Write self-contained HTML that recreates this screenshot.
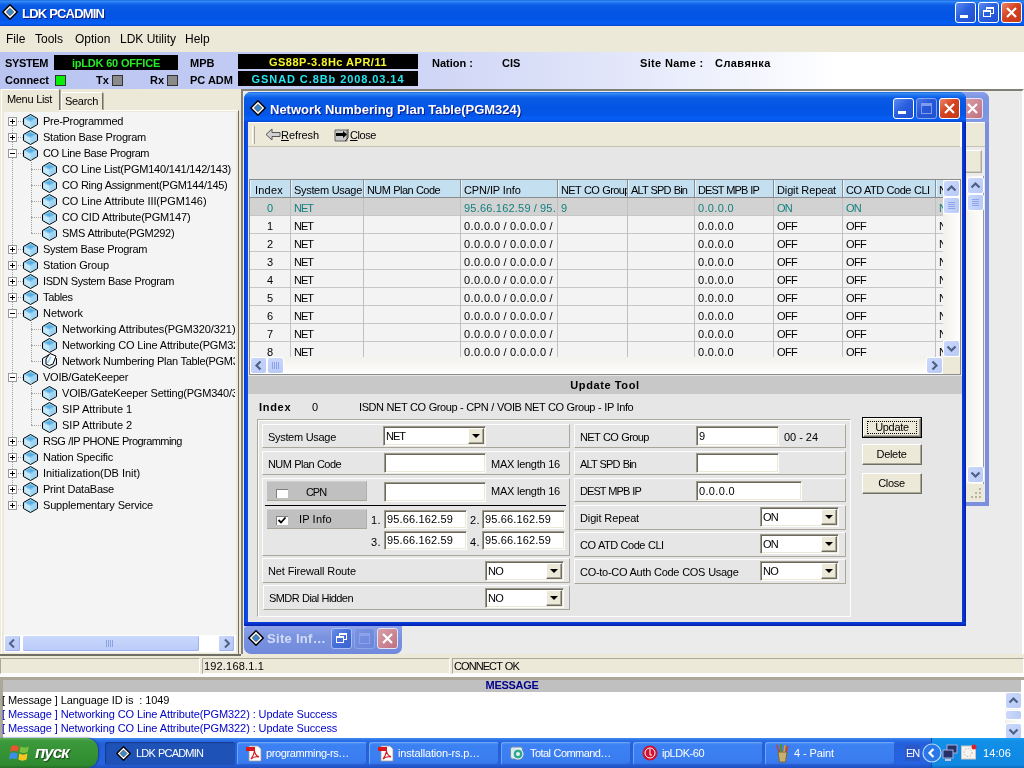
<!DOCTYPE html><html><head><meta charset="utf-8"><title>LDK PCADMIN</title><style>
*{box-sizing:border-box;margin:0;padding:0}
html,body{width:1024px;height:768px;overflow:hidden;background:#ebebeb}
body{font-family:"Liberation Sans",sans-serif;font-size:11px;color:#000;position:relative;letter-spacing:-0.2px;will-change:transform}
.a{position:absolute;white-space:nowrap}
.t{position:absolute;white-space:nowrap;line-height:14px;height:14px}
.b{font-weight:bold}
.xptitle{background:linear-gradient(180deg,#0a5fe0 0,#3b8df5 4%,#2178f0 10%,#0a5ce6 20%,#0455e4 50%,#0356e8 75%,#0660f5 88%,#0558ee 94%,#0345c8 100%)}
.sunk{border:1px solid;border-color:#9d9a8c #fdfdfb #fdfdfb #9d9a8c;box-shadow:inset 1px 1px 0 #6a685c, inset -1px -1px 0 #ece9d8;background:#fff}
.grp{position:absolute;border:1px solid;border-color:#aaa79a #fdfdfd #fdfdfd #aaa79a;box-shadow:inset 1px 1px 0 #fdfdfd;background:#e6e6e6}
.row{position:absolute;border:1px solid;border-color:#fdfdfd #aaa79a #aaa79a #fdfdfd;background:#e6e6e6}
.btn{position:absolute;background:#ece9d8;border:1px solid;border-color:#fff #716f64 #716f64 #fff;box-shadow:inset -1px -1px 0 #aca899;text-align:center;line-height:18px}
.cbb{position:absolute;width:16px;height:16px;background:#ece9d8;border:1px solid;border-color:#fff #6e6c60 #6e6c60 #fff;box-shadow:inset -1px -1px 0 #aca899}
.cbb:after{content:"";position:absolute;left:3px;top:5px;border:4px solid transparent;border-top:4px solid #000;border-bottom:none}
</style></head><body>
<div class="a xptitle" style="left:0px;top:0px;width:1024px;height:26px;"></div>
<div class="t" style="left:22px;top:6px;color:#fff;font-weight:bold;font-size:13px;line-height:16px;height:16px;text-shadow:1px 1px 0 #0a1883;letter-spacing:-0.8px">LDK PCADMIN</div>
<svg class="a" style="left:2px;top:4px" width="16" height="16" viewBox="0 0 15 15"><path d="M7.5 0.7 L14.3 7.5 L7.5 14.3 L0.7 7.5Z" fill="#fff" stroke="#000" stroke-width="1.4"/><path d="M7.5 4 L11 7.5 L7.5 11 L4 7.5Z" fill="#3a8ad0" stroke="#555" stroke-width="0.8"/></svg>
<div class="a" style="left:955px;top:2px;width:21px;height:21px;border:1px solid #fff;border-radius:3px;background:linear-gradient(135deg,#5f8cf0 0,#2a5fe0 45%,#1f4fd0 100%)"><div class="a" style="left:4px;top:12px;width:8px;height:3px;background:#fff"></div></div>
<div class="a" style="left:978px;top:2px;width:21px;height:21px;border:1px solid #fff;border-radius:3px;background:linear-gradient(135deg,#5f8cf0 0,#2a5fe0 45%,#1f4fd0 100%)"><div class="a" style="left:7px;top:4px;width:8px;height:7px;border:1px solid #fff;border-top-width:2px"></div><div class="a" style="left:4px;top:7px;width:8px;height:7px;border:1px solid #fff;border-top-width:2px;background:#2a5fe0"></div></div>
<div class="a" style="left:1001px;top:2px;width:21px;height:21px;border:1px solid #fff;border-radius:3px;background:linear-gradient(135deg,#e8876a 0,#d6431f 45%,#c4381a 100%)"><svg class="a" style="left:0;top:0" width="19" height="19" viewBox="0 0 19 19"><path d="M5 5 L14 14 M14 5 L5 14" stroke="#fff" stroke-width="2.2" fill="none"/></svg></div>
<div class="a" style="left:0px;top:26px;width:1024px;height:26px;background:#ece9d8"></div>
<div class="t" style="left:6px;top:31px;font-size:12px;line-height:16px;height:16px;letter-spacing:0">File</div>
<div class="t" style="left:35px;top:31px;font-size:12px;line-height:16px;height:16px;letter-spacing:0">Tools</div>
<div class="t" style="left:75px;top:31px;font-size:12px;line-height:16px;height:16px;letter-spacing:0">Option</div>
<div class="t" style="left:120px;top:31px;font-size:12px;line-height:16px;height:16px;letter-spacing:0">LDK Utility</div>
<div class="t" style="left:185px;top:31px;font-size:12px;line-height:16px;height:16px;letter-spacing:0">Help</div>
<div class="a" style="left:0px;top:52px;width:1024px;height:37px;background:linear-gradient(90deg,#b9c4f1 0,#c3ccf3 30%,#e2e6fa 60%,#fff 82%)"></div>
<div class="t" style="left:5px;top:56px;font-weight:bold;letter-spacing:-0.37px">SYSTEM</div>
<div class="a" style="left:54px;top:55px;width:124px;height:15px;background:#000"></div>
<div class="t" style="left:54px;top:56px;font-weight:bold;letter-spacing:-0.2px;color:#28e828;width:124px;text-align:center">ipLDK 60 OFFICE</div>
<div class="t" style="left:190px;top:56px;font-weight:bold;letter-spacing:0;">MPB</div>
<div class="a" style="left:238px;top:54px;width:180px;height:15px;background:#000"></div>
<div class="t" style="left:238px;top:55px;font-weight:bold;letter-spacing:0.5px;color:#f6f624;width:180px;text-align:center">GS88P-3.8Hc APR/11</div>
<div class="t" style="left:432px;top:56px;font-weight:bold;letter-spacing:0;">Nation :</div>
<div class="t" style="left:502px;top:56px;font-weight:bold;letter-spacing:0;">CIS</div>
<div class="t" style="left:640px;top:56px;font-weight:bold;letter-spacing:0.33px">Site Name :</div>
<div class="t" style="left:715px;top:56px;font-weight:bold;letter-spacing:0.44px">Славянка</div>
<div class="t" style="left:5px;top:73px;font-weight:bold;letter-spacing:0;">Connect</div>
<div class="a" style="left:55px;top:75px;width:11px;height:11px;background:#08ee08;border:1px solid #333"></div>
<div class="t" style="left:96px;top:73px;font-weight:bold;letter-spacing:0;">Tx</div>
<div class="a" style="left:112px;top:75px;width:11px;height:11px;background:#8a8a8a;border:1px solid #333"></div>
<div class="t" style="left:150px;top:73px;font-weight:bold;letter-spacing:0;">Rx</div>
<div class="a" style="left:167px;top:75px;width:11px;height:11px;background:#8a8a8a;border:1px solid #333"></div>
<div class="t" style="left:190px;top:73px;font-weight:bold;letter-spacing:0;">PC ADM</div>
<div class="a" style="left:238px;top:71px;width:180px;height:15px;background:#000"></div>
<div class="t" style="left:238px;top:72px;font-weight:bold;letter-spacing:0.92px;color:#28e4f0;width:180px;text-align:center">GSNAD C.8Bb 2008.03.14</div>
<div class="a" style="left:0px;top:89px;width:241px;height:568px;background:#ece9d8"></div>
<div class="a" style="left:61px;top:92px;width:42px;height:18px;border:1px solid;border-color:#fff #716f64 transparent #fff;border-radius:2px 2px 0 0;box-shadow:1px 0 0 #aca899"></div>
<div class="t" style="left:65px;top:94px;;letter-spacing:-0.31px">Search</div>
<div class="a" style="left:1px;top:89px;width:59px;height:22px;border:1px solid;border-color:#fff #716f64 transparent #fff;border-radius:2px 2px 0 0;background:#ece9d8;box-shadow:1px 0 0 #aca899"></div>
<div class="t" style="left:7px;top:92px;;letter-spacing:-0.33px;word-spacing:0.27px">Menu List</div>
<div class="a" style="left:1px;top:110px;width:238px;height:545px;border:1px solid;border-color:#fff #716f64 #716f64 #fff;"></div>
<div class="a" style="left:2px;top:110px;width:57px;height:2px;background:#ece9d8"></div>
<div class="a" style="left:4px;top:112px;width:232px;height:541px;background:#f4f4f4"></div>
<div class="a" style="left:4px;top:112px;width:231px;height:523px;overflow:hidden">
<div class="a" style="left:8px;top:9px;width:0;height:384px;border-left:1px dotted #a0a0a0"></div>
<div class="a" style="left:9px;top:9px;width:12px;height:0;border-top:1px dotted #a0a0a0"></div>
<div class="a" style="left:4px;top:5px;width:9px;height:9px;border:1px solid #9a9a9a;background:#fff"><div class="a" style="left:1px;top:3px;width:5px;height:1px;background:#000"></div><div class="a" style="left:3px;top:1px;width:1px;height:5px;background:#000"></div></div>
<svg class="a" style="left:19px;top:2px" width="16" height="15" viewBox="0 0 16 15"><path d="M7.5 0.5 L14.5 4.5 L14.5 10.5 L7.5 14.5 L0.5 10.5 L0.5 4.5Z" fill="#a6daf5" stroke="#000" stroke-width="1"/><path d="M7.5 1.6 L13.4 4.8 L7.5 8 L1.6 4.8Z" fill="#7cc6ec"/><path d="M7.5 2.8 L11.2 4.6 L7.5 6.4 L3.8 4.6Z" fill="#58afe0"/><path d="M7.5 8 L13.6 4.9 L13.6 10.2 L7.5 13.5Z" fill="#9dd4f2"/><path d="M7.5 8 L1.4 4.9 L1.4 10.2 L7.5 13.5Z" fill="#c3e8fa"/></svg>
<div class="t" style="left:39px;top:2px;;letter-spacing:-0.31px">Pre-Programmed</div>
<div class="a" style="left:9px;top:25px;width:12px;height:0;border-top:1px dotted #a0a0a0"></div>
<div class="a" style="left:4px;top:21px;width:9px;height:9px;border:1px solid #9a9a9a;background:#fff"><div class="a" style="left:1px;top:3px;width:5px;height:1px;background:#000"></div><div class="a" style="left:3px;top:1px;width:1px;height:5px;background:#000"></div></div>
<svg class="a" style="left:19px;top:18px" width="16" height="15" viewBox="0 0 16 15"><path d="M7.5 0.5 L14.5 4.5 L14.5 10.5 L7.5 14.5 L0.5 10.5 L0.5 4.5Z" fill="#a6daf5" stroke="#000" stroke-width="1"/><path d="M7.5 1.6 L13.4 4.8 L7.5 8 L1.6 4.8Z" fill="#7cc6ec"/><path d="M7.5 2.8 L11.2 4.6 L7.5 6.4 L3.8 4.6Z" fill="#58afe0"/><path d="M7.5 8 L13.6 4.9 L13.6 10.2 L7.5 13.5Z" fill="#9dd4f2"/><path d="M7.5 8 L1.4 4.9 L1.4 10.2 L7.5 13.5Z" fill="#c3e8fa"/></svg>
<div class="t" style="left:39px;top:18px;;letter-spacing:-0.25px;word-spacing:0.19px">Station Base Program</div>
<div class="a" style="left:9px;top:41px;width:12px;height:0;border-top:1px dotted #a0a0a0"></div>
<div class="a" style="left:4px;top:37px;width:9px;height:9px;border:1px solid #9a9a9a;background:#fff"><div class="a" style="left:1px;top:3px;width:5px;height:1px;background:#000"></div></div>
<svg class="a" style="left:19px;top:34px" width="16" height="15" viewBox="0 0 16 15"><path d="M7.5 0.5 L14.5 4.5 L14.5 10.5 L7.5 14.5 L0.5 10.5 L0.5 4.5Z" fill="#a6daf5" stroke="#000" stroke-width="1"/><path d="M7.5 1.6 L13.4 4.8 L7.5 8 L1.6 4.8Z" fill="#7cc6ec"/><path d="M7.5 2.8 L11.2 4.6 L7.5 6.4 L3.8 4.6Z" fill="#58afe0"/><path d="M7.5 8 L13.6 4.9 L13.6 10.2 L7.5 13.5Z" fill="#9dd4f2"/><path d="M7.5 8 L1.4 4.9 L1.4 10.2 L7.5 13.5Z" fill="#c3e8fa"/></svg>
<div class="t" style="left:39px;top:34px;;letter-spacing:-0.44px;word-spacing:0.38px">CO Line Base Program</div>
<div class="a" style="left:27px;top:57px;width:12px;height:0;border-top:1px dotted #a0a0a0"></div>
<svg class="a" style="left:38px;top:50px" width="16" height="15" viewBox="0 0 16 15"><path d="M7.5 0.5 L14.5 4.5 L14.5 10.5 L7.5 14.5 L0.5 10.5 L0.5 4.5Z" fill="#a6daf5" stroke="#000" stroke-width="1"/><path d="M7.5 1.6 L13.4 4.8 L7.5 8 L1.6 4.8Z" fill="#7cc6ec"/><path d="M7.5 2.8 L11.2 4.6 L7.5 6.4 L3.8 4.6Z" fill="#58afe0"/><path d="M7.5 8 L13.6 4.9 L13.6 10.2 L7.5 13.5Z" fill="#9dd4f2"/><path d="M7.5 8 L1.4 4.9 L1.4 10.2 L7.5 13.5Z" fill="#c3e8fa"/></svg>
<div class="t" style="left:58px;top:50px;;letter-spacing:-0.21px;word-spacing:0.15px">CO Line List(PGM140/141/142/143)</div>
<div class="a" style="left:27px;top:73px;width:12px;height:0;border-top:1px dotted #a0a0a0"></div>
<svg class="a" style="left:38px;top:66px" width="16" height="15" viewBox="0 0 16 15"><path d="M7.5 0.5 L14.5 4.5 L14.5 10.5 L7.5 14.5 L0.5 10.5 L0.5 4.5Z" fill="#a6daf5" stroke="#000" stroke-width="1"/><path d="M7.5 1.6 L13.4 4.8 L7.5 8 L1.6 4.8Z" fill="#7cc6ec"/><path d="M7.5 2.8 L11.2 4.6 L7.5 6.4 L3.8 4.6Z" fill="#58afe0"/><path d="M7.5 8 L13.6 4.9 L13.6 10.2 L7.5 13.5Z" fill="#9dd4f2"/><path d="M7.5 8 L1.4 4.9 L1.4 10.2 L7.5 13.5Z" fill="#c3e8fa"/></svg>
<div class="t" style="left:58px;top:66px;;letter-spacing:-0.31px;word-spacing:0.25px">CO Ring Assignment(PGM144/145)</div>
<div class="a" style="left:27px;top:89px;width:12px;height:0;border-top:1px dotted #a0a0a0"></div>
<svg class="a" style="left:38px;top:82px" width="16" height="15" viewBox="0 0 16 15"><path d="M7.5 0.5 L14.5 4.5 L14.5 10.5 L7.5 14.5 L0.5 10.5 L0.5 4.5Z" fill="#a6daf5" stroke="#000" stroke-width="1"/><path d="M7.5 1.6 L13.4 4.8 L7.5 8 L1.6 4.8Z" fill="#7cc6ec"/><path d="M7.5 2.8 L11.2 4.6 L7.5 6.4 L3.8 4.6Z" fill="#58afe0"/><path d="M7.5 8 L13.6 4.9 L13.6 10.2 L7.5 13.5Z" fill="#9dd4f2"/><path d="M7.5 8 L1.4 4.9 L1.4 10.2 L7.5 13.5Z" fill="#c3e8fa"/></svg>
<div class="t" style="left:58px;top:82px;;letter-spacing:-0.08px;word-spacing:0.02px">CO Line Attribute III(PGM146)</div>
<div class="a" style="left:27px;top:105px;width:12px;height:0;border-top:1px dotted #a0a0a0"></div>
<svg class="a" style="left:38px;top:98px" width="16" height="15" viewBox="0 0 16 15"><path d="M7.5 0.5 L14.5 4.5 L14.5 10.5 L7.5 14.5 L0.5 10.5 L0.5 4.5Z" fill="#a6daf5" stroke="#000" stroke-width="1"/><path d="M7.5 1.6 L13.4 4.8 L7.5 8 L1.6 4.8Z" fill="#7cc6ec"/><path d="M7.5 2.8 L11.2 4.6 L7.5 6.4 L3.8 4.6Z" fill="#58afe0"/><path d="M7.5 8 L13.6 4.9 L13.6 10.2 L7.5 13.5Z" fill="#9dd4f2"/><path d="M7.5 8 L1.4 4.9 L1.4 10.2 L7.5 13.5Z" fill="#c3e8fa"/></svg>
<div class="t" style="left:58px;top:98px;;letter-spacing:-0.19px;word-spacing:0.13px">CO CID Attribute(PGM147)</div>
<div class="a" style="left:27px;top:121px;width:12px;height:0;border-top:1px dotted #a0a0a0"></div>
<svg class="a" style="left:38px;top:114px" width="16" height="15" viewBox="0 0 16 15"><path d="M7.5 0.5 L14.5 4.5 L14.5 10.5 L7.5 14.5 L0.5 10.5 L0.5 4.5Z" fill="#a6daf5" stroke="#000" stroke-width="1"/><path d="M7.5 1.6 L13.4 4.8 L7.5 8 L1.6 4.8Z" fill="#7cc6ec"/><path d="M7.5 2.8 L11.2 4.6 L7.5 6.4 L3.8 4.6Z" fill="#58afe0"/><path d="M7.5 8 L13.6 4.9 L13.6 10.2 L7.5 13.5Z" fill="#9dd4f2"/><path d="M7.5 8 L1.4 4.9 L1.4 10.2 L7.5 13.5Z" fill="#c3e8fa"/></svg>
<div class="t" style="left:58px;top:114px;;letter-spacing:-0.28px;word-spacing:0.22px">SMS Attribute(PGM292)</div>
<div class="a" style="left:9px;top:137px;width:12px;height:0;border-top:1px dotted #a0a0a0"></div>
<div class="a" style="left:4px;top:133px;width:9px;height:9px;border:1px solid #9a9a9a;background:#fff"><div class="a" style="left:1px;top:3px;width:5px;height:1px;background:#000"></div><div class="a" style="left:3px;top:1px;width:1px;height:5px;background:#000"></div></div>
<svg class="a" style="left:19px;top:130px" width="16" height="15" viewBox="0 0 16 15"><path d="M7.5 0.5 L14.5 4.5 L14.5 10.5 L7.5 14.5 L0.5 10.5 L0.5 4.5Z" fill="#a6daf5" stroke="#000" stroke-width="1"/><path d="M7.5 1.6 L13.4 4.8 L7.5 8 L1.6 4.8Z" fill="#7cc6ec"/><path d="M7.5 2.8 L11.2 4.6 L7.5 6.4 L3.8 4.6Z" fill="#58afe0"/><path d="M7.5 8 L13.6 4.9 L13.6 10.2 L7.5 13.5Z" fill="#9dd4f2"/><path d="M7.5 8 L1.4 4.9 L1.4 10.2 L7.5 13.5Z" fill="#c3e8fa"/></svg>
<div class="t" style="left:39px;top:130px;;letter-spacing:-0.35px;word-spacing:0.29px">System Base Program</div>
<div class="a" style="left:9px;top:153px;width:12px;height:0;border-top:1px dotted #a0a0a0"></div>
<div class="a" style="left:4px;top:149px;width:9px;height:9px;border:1px solid #9a9a9a;background:#fff"><div class="a" style="left:1px;top:3px;width:5px;height:1px;background:#000"></div><div class="a" style="left:3px;top:1px;width:1px;height:5px;background:#000"></div></div>
<svg class="a" style="left:19px;top:146px" width="16" height="15" viewBox="0 0 16 15"><path d="M7.5 0.5 L14.5 4.5 L14.5 10.5 L7.5 14.5 L0.5 10.5 L0.5 4.5Z" fill="#a6daf5" stroke="#000" stroke-width="1"/><path d="M7.5 1.6 L13.4 4.8 L7.5 8 L1.6 4.8Z" fill="#7cc6ec"/><path d="M7.5 2.8 L11.2 4.6 L7.5 6.4 L3.8 4.6Z" fill="#58afe0"/><path d="M7.5 8 L13.6 4.9 L13.6 10.2 L7.5 13.5Z" fill="#9dd4f2"/><path d="M7.5 8 L1.4 4.9 L1.4 10.2 L7.5 13.5Z" fill="#c3e8fa"/></svg>
<div class="t" style="left:39px;top:146px;;letter-spacing:-0.15px;word-spacing:0.09px">Station Group</div>
<div class="a" style="left:9px;top:169px;width:12px;height:0;border-top:1px dotted #a0a0a0"></div>
<div class="a" style="left:4px;top:165px;width:9px;height:9px;border:1px solid #9a9a9a;background:#fff"><div class="a" style="left:1px;top:3px;width:5px;height:1px;background:#000"></div><div class="a" style="left:3px;top:1px;width:1px;height:5px;background:#000"></div></div>
<svg class="a" style="left:19px;top:162px" width="16" height="15" viewBox="0 0 16 15"><path d="M7.5 0.5 L14.5 4.5 L14.5 10.5 L7.5 14.5 L0.5 10.5 L0.5 4.5Z" fill="#a6daf5" stroke="#000" stroke-width="1"/><path d="M7.5 1.6 L13.4 4.8 L7.5 8 L1.6 4.8Z" fill="#7cc6ec"/><path d="M7.5 2.8 L11.2 4.6 L7.5 6.4 L3.8 4.6Z" fill="#58afe0"/><path d="M7.5 8 L13.6 4.9 L13.6 10.2 L7.5 13.5Z" fill="#9dd4f2"/><path d="M7.5 8 L1.4 4.9 L1.4 10.2 L7.5 13.5Z" fill="#c3e8fa"/></svg>
<div class="t" style="left:39px;top:162px;;letter-spacing:-0.39px;word-spacing:0.33px">ISDN System Base Program</div>
<div class="a" style="left:9px;top:185px;width:12px;height:0;border-top:1px dotted #a0a0a0"></div>
<div class="a" style="left:4px;top:181px;width:9px;height:9px;border:1px solid #9a9a9a;background:#fff"><div class="a" style="left:1px;top:3px;width:5px;height:1px;background:#000"></div><div class="a" style="left:3px;top:1px;width:1px;height:5px;background:#000"></div></div>
<svg class="a" style="left:19px;top:178px" width="16" height="15" viewBox="0 0 16 15"><path d="M7.5 0.5 L14.5 4.5 L14.5 10.5 L7.5 14.5 L0.5 10.5 L0.5 4.5Z" fill="#a6daf5" stroke="#000" stroke-width="1"/><path d="M7.5 1.6 L13.4 4.8 L7.5 8 L1.6 4.8Z" fill="#7cc6ec"/><path d="M7.5 2.8 L11.2 4.6 L7.5 6.4 L3.8 4.6Z" fill="#58afe0"/><path d="M7.5 8 L13.6 4.9 L13.6 10.2 L7.5 13.5Z" fill="#9dd4f2"/><path d="M7.5 8 L1.4 4.9 L1.4 10.2 L7.5 13.5Z" fill="#c3e8fa"/></svg>
<div class="t" style="left:39px;top:178px;;letter-spacing:-0.34px">Tables</div>
<div class="a" style="left:9px;top:201px;width:12px;height:0;border-top:1px dotted #a0a0a0"></div>
<div class="a" style="left:4px;top:197px;width:9px;height:9px;border:1px solid #9a9a9a;background:#fff"><div class="a" style="left:1px;top:3px;width:5px;height:1px;background:#000"></div></div>
<svg class="a" style="left:19px;top:194px" width="16" height="15" viewBox="0 0 16 15"><path d="M7.5 0.5 L14.5 4.5 L14.5 10.5 L7.5 14.5 L0.5 10.5 L0.5 4.5Z" fill="#a6daf5" stroke="#000" stroke-width="1"/><path d="M7.5 1.6 L13.4 4.8 L7.5 8 L1.6 4.8Z" fill="#7cc6ec"/><path d="M7.5 2.8 L11.2 4.6 L7.5 6.4 L3.8 4.6Z" fill="#58afe0"/><path d="M7.5 8 L13.6 4.9 L13.6 10.2 L7.5 13.5Z" fill="#9dd4f2"/><path d="M7.5 8 L1.4 4.9 L1.4 10.2 L7.5 13.5Z" fill="#c3e8fa"/></svg>
<div class="t" style="left:39px;top:194px;;letter-spacing:-0.05px">Network</div>
<div class="a" style="left:27px;top:217px;width:12px;height:0;border-top:1px dotted #a0a0a0"></div>
<svg class="a" style="left:38px;top:210px" width="16" height="15" viewBox="0 0 16 15"><path d="M7.5 0.5 L14.5 4.5 L14.5 10.5 L7.5 14.5 L0.5 10.5 L0.5 4.5Z" fill="#a6daf5" stroke="#000" stroke-width="1"/><path d="M7.5 1.6 L13.4 4.8 L7.5 8 L1.6 4.8Z" fill="#7cc6ec"/><path d="M7.5 2.8 L11.2 4.6 L7.5 6.4 L3.8 4.6Z" fill="#58afe0"/><path d="M7.5 8 L13.6 4.9 L13.6 10.2 L7.5 13.5Z" fill="#9dd4f2"/><path d="M7.5 8 L1.4 4.9 L1.4 10.2 L7.5 13.5Z" fill="#c3e8fa"/></svg>
<div class="t" style="left:58px;top:210px;;letter-spacing:-0.08px;word-spacing:0.02px">Networking Attributes(PGM320/321)</div>
<div class="a" style="left:27px;top:233px;width:12px;height:0;border-top:1px dotted #a0a0a0"></div>
<svg class="a" style="left:38px;top:226px" width="16" height="15" viewBox="0 0 16 15"><path d="M7.5 0.5 L14.5 4.5 L14.5 10.5 L7.5 14.5 L0.5 10.5 L0.5 4.5Z" fill="#a6daf5" stroke="#000" stroke-width="1"/><path d="M7.5 1.6 L13.4 4.8 L7.5 8 L1.6 4.8Z" fill="#7cc6ec"/><path d="M7.5 2.8 L11.2 4.6 L7.5 6.4 L3.8 4.6Z" fill="#58afe0"/><path d="M7.5 8 L13.6 4.9 L13.6 10.2 L7.5 13.5Z" fill="#9dd4f2"/><path d="M7.5 8 L1.4 4.9 L1.4 10.2 L7.5 13.5Z" fill="#c3e8fa"/></svg>
<div class="t" style="left:58px;top:226px;;letter-spacing:-0.18px;word-spacing:0.12px">Networking CO Line Attribute(PGM322)</div>
<div class="a" style="left:27px;top:249px;width:12px;height:0;border-top:1px dotted #a0a0a0"></div>
<svg class="a" style="left:38px;top:240px" width="16" height="17" viewBox="0 0 16 17"><path d="M7.5 2.5 L14.5 6.5 L14.5 12.5 L7.5 16.5 L0.5 12.5 L0.5 6.5Z" fill="#d8eefa" stroke="#000" stroke-width="1"/><path d="M4 7 L8 1.5 L14 4 L11 12 Q7 15 4 12Z" fill="#f8fcff" stroke="#000" stroke-width="1"/><path d="M5.5 11 L9 5" stroke="#9ccfee" stroke-width="1.5"/></svg>
<div class="t" style="left:58px;top:242px;;letter-spacing:-0.32px;word-spacing:0.26px">Network Numbering Plan Table(PGM324)</div>
<div class="a" style="left:9px;top:265px;width:12px;height:0;border-top:1px dotted #a0a0a0"></div>
<div class="a" style="left:4px;top:261px;width:9px;height:9px;border:1px solid #9a9a9a;background:#fff"><div class="a" style="left:1px;top:3px;width:5px;height:1px;background:#000"></div></div>
<svg class="a" style="left:19px;top:258px" width="16" height="15" viewBox="0 0 16 15"><path d="M7.5 0.5 L14.5 4.5 L14.5 10.5 L7.5 14.5 L0.5 10.5 L0.5 4.5Z" fill="#a6daf5" stroke="#000" stroke-width="1"/><path d="M7.5 1.6 L13.4 4.8 L7.5 8 L1.6 4.8Z" fill="#7cc6ec"/><path d="M7.5 2.8 L11.2 4.6 L7.5 6.4 L3.8 4.6Z" fill="#58afe0"/><path d="M7.5 8 L13.6 4.9 L13.6 10.2 L7.5 13.5Z" fill="#9dd4f2"/><path d="M7.5 8 L1.4 4.9 L1.4 10.2 L7.5 13.5Z" fill="#c3e8fa"/></svg>
<div class="t" style="left:39px;top:258px;;letter-spacing:-0.24px">VOIB/GateKeeper</div>
<div class="a" style="left:27px;top:281px;width:12px;height:0;border-top:1px dotted #a0a0a0"></div>
<svg class="a" style="left:38px;top:274px" width="16" height="15" viewBox="0 0 16 15"><path d="M7.5 0.5 L14.5 4.5 L14.5 10.5 L7.5 14.5 L0.5 10.5 L0.5 4.5Z" fill="#a6daf5" stroke="#000" stroke-width="1"/><path d="M7.5 1.6 L13.4 4.8 L7.5 8 L1.6 4.8Z" fill="#7cc6ec"/><path d="M7.5 2.8 L11.2 4.6 L7.5 6.4 L3.8 4.6Z" fill="#58afe0"/><path d="M7.5 8 L13.6 4.9 L13.6 10.2 L7.5 13.5Z" fill="#9dd4f2"/><path d="M7.5 8 L1.4 4.9 L1.4 10.2 L7.5 13.5Z" fill="#c3e8fa"/></svg>
<div class="t" style="left:58px;top:274px;;letter-spacing:-0.21px;word-spacing:0.15px">VOIB/GateKeeper Setting(PGM340/341)</div>
<div class="a" style="left:27px;top:297px;width:12px;height:0;border-top:1px dotted #a0a0a0"></div>
<svg class="a" style="left:38px;top:290px" width="16" height="15" viewBox="0 0 16 15"><path d="M7.5 0.5 L14.5 4.5 L14.5 10.5 L7.5 14.5 L0.5 10.5 L0.5 4.5Z" fill="#a6daf5" stroke="#000" stroke-width="1"/><path d="M7.5 1.6 L13.4 4.8 L7.5 8 L1.6 4.8Z" fill="#7cc6ec"/><path d="M7.5 2.8 L11.2 4.6 L7.5 6.4 L3.8 4.6Z" fill="#58afe0"/><path d="M7.5 8 L13.6 4.9 L13.6 10.2 L7.5 13.5Z" fill="#9dd4f2"/><path d="M7.5 8 L1.4 4.9 L1.4 10.2 L7.5 13.5Z" fill="#c3e8fa"/></svg>
<div class="t" style="left:58px;top:290px;;letter-spacing:0.01px;word-spacing:-0.07px">SIP Attribute 1</div>
<div class="a" style="left:27px;top:313px;width:12px;height:0;border-top:1px dotted #a0a0a0"></div>
<svg class="a" style="left:38px;top:306px" width="16" height="15" viewBox="0 0 16 15"><path d="M7.5 0.5 L14.5 4.5 L14.5 10.5 L7.5 14.5 L0.5 10.5 L0.5 4.5Z" fill="#a6daf5" stroke="#000" stroke-width="1"/><path d="M7.5 1.6 L13.4 4.8 L7.5 8 L1.6 4.8Z" fill="#7cc6ec"/><path d="M7.5 2.8 L11.2 4.6 L7.5 6.4 L3.8 4.6Z" fill="#58afe0"/><path d="M7.5 8 L13.6 4.9 L13.6 10.2 L7.5 13.5Z" fill="#9dd4f2"/><path d="M7.5 8 L1.4 4.9 L1.4 10.2 L7.5 13.5Z" fill="#c3e8fa"/></svg>
<div class="t" style="left:58px;top:306px;;letter-spacing:0.01px;word-spacing:-0.07px">SIP Attribute 2</div>
<div class="a" style="left:9px;top:329px;width:12px;height:0;border-top:1px dotted #a0a0a0"></div>
<div class="a" style="left:4px;top:325px;width:9px;height:9px;border:1px solid #9a9a9a;background:#fff"><div class="a" style="left:1px;top:3px;width:5px;height:1px;background:#000"></div><div class="a" style="left:3px;top:1px;width:1px;height:5px;background:#000"></div></div>
<svg class="a" style="left:19px;top:322px" width="16" height="15" viewBox="0 0 16 15"><path d="M7.5 0.5 L14.5 4.5 L14.5 10.5 L7.5 14.5 L0.5 10.5 L0.5 4.5Z" fill="#a6daf5" stroke="#000" stroke-width="1"/><path d="M7.5 1.6 L13.4 4.8 L7.5 8 L1.6 4.8Z" fill="#7cc6ec"/><path d="M7.5 2.8 L11.2 4.6 L7.5 6.4 L3.8 4.6Z" fill="#58afe0"/><path d="M7.5 8 L13.6 4.9 L13.6 10.2 L7.5 13.5Z" fill="#9dd4f2"/><path d="M7.5 8 L1.4 4.9 L1.4 10.2 L7.5 13.5Z" fill="#c3e8fa"/></svg>
<div class="t" style="left:39px;top:322px;;letter-spacing:-0.56px;word-spacing:0.5px">RSG /IP PHONE Programming</div>
<div class="a" style="left:9px;top:345px;width:12px;height:0;border-top:1px dotted #a0a0a0"></div>
<div class="a" style="left:4px;top:341px;width:9px;height:9px;border:1px solid #9a9a9a;background:#fff"><div class="a" style="left:1px;top:3px;width:5px;height:1px;background:#000"></div><div class="a" style="left:3px;top:1px;width:1px;height:5px;background:#000"></div></div>
<svg class="a" style="left:19px;top:338px" width="16" height="15" viewBox="0 0 16 15"><path d="M7.5 0.5 L14.5 4.5 L14.5 10.5 L7.5 14.5 L0.5 10.5 L0.5 4.5Z" fill="#a6daf5" stroke="#000" stroke-width="1"/><path d="M7.5 1.6 L13.4 4.8 L7.5 8 L1.6 4.8Z" fill="#7cc6ec"/><path d="M7.5 2.8 L11.2 4.6 L7.5 6.4 L3.8 4.6Z" fill="#58afe0"/><path d="M7.5 8 L13.6 4.9 L13.6 10.2 L7.5 13.5Z" fill="#9dd4f2"/><path d="M7.5 8 L1.4 4.9 L1.4 10.2 L7.5 13.5Z" fill="#c3e8fa"/></svg>
<div class="t" style="left:39px;top:338px;;letter-spacing:-0.24px;word-spacing:0.18px">Nation Specific</div>
<div class="a" style="left:9px;top:361px;width:12px;height:0;border-top:1px dotted #a0a0a0"></div>
<div class="a" style="left:4px;top:357px;width:9px;height:9px;border:1px solid #9a9a9a;background:#fff"><div class="a" style="left:1px;top:3px;width:5px;height:1px;background:#000"></div><div class="a" style="left:3px;top:1px;width:1px;height:5px;background:#000"></div></div>
<svg class="a" style="left:19px;top:354px" width="16" height="15" viewBox="0 0 16 15"><path d="M7.5 0.5 L14.5 4.5 L14.5 10.5 L7.5 14.5 L0.5 10.5 L0.5 4.5Z" fill="#a6daf5" stroke="#000" stroke-width="1"/><path d="M7.5 1.6 L13.4 4.8 L7.5 8 L1.6 4.8Z" fill="#7cc6ec"/><path d="M7.5 2.8 L11.2 4.6 L7.5 6.4 L3.8 4.6Z" fill="#58afe0"/><path d="M7.5 8 L13.6 4.9 L13.6 10.2 L7.5 13.5Z" fill="#9dd4f2"/><path d="M7.5 8 L1.4 4.9 L1.4 10.2 L7.5 13.5Z" fill="#c3e8fa"/></svg>
<div class="t" style="left:39px;top:354px;;letter-spacing:-0.03px;word-spacing:-0.03px">Initialization(DB Init)</div>
<div class="a" style="left:9px;top:377px;width:12px;height:0;border-top:1px dotted #a0a0a0"></div>
<div class="a" style="left:4px;top:373px;width:9px;height:9px;border:1px solid #9a9a9a;background:#fff"><div class="a" style="left:1px;top:3px;width:5px;height:1px;background:#000"></div><div class="a" style="left:3px;top:1px;width:1px;height:5px;background:#000"></div></div>
<svg class="a" style="left:19px;top:370px" width="16" height="15" viewBox="0 0 16 15"><path d="M7.5 0.5 L14.5 4.5 L14.5 10.5 L7.5 14.5 L0.5 10.5 L0.5 4.5Z" fill="#a6daf5" stroke="#000" stroke-width="1"/><path d="M7.5 1.6 L13.4 4.8 L7.5 8 L1.6 4.8Z" fill="#7cc6ec"/><path d="M7.5 2.8 L11.2 4.6 L7.5 6.4 L3.8 4.6Z" fill="#58afe0"/><path d="M7.5 8 L13.6 4.9 L13.6 10.2 L7.5 13.5Z" fill="#9dd4f2"/><path d="M7.5 8 L1.4 4.9 L1.4 10.2 L7.5 13.5Z" fill="#c3e8fa"/></svg>
<div class="t" style="left:39px;top:370px;;letter-spacing:-0.23px;word-spacing:0.17px">Print DataBase</div>
<div class="a" style="left:9px;top:393px;width:12px;height:0;border-top:1px dotted #a0a0a0"></div>
<div class="a" style="left:4px;top:389px;width:9px;height:9px;border:1px solid #9a9a9a;background:#fff"><div class="a" style="left:1px;top:3px;width:5px;height:1px;background:#000"></div><div class="a" style="left:3px;top:1px;width:1px;height:5px;background:#000"></div></div>
<svg class="a" style="left:19px;top:386px" width="16" height="15" viewBox="0 0 16 15"><path d="M7.5 0.5 L14.5 4.5 L14.5 10.5 L7.5 14.5 L0.5 10.5 L0.5 4.5Z" fill="#a6daf5" stroke="#000" stroke-width="1"/><path d="M7.5 1.6 L13.4 4.8 L7.5 8 L1.6 4.8Z" fill="#7cc6ec"/><path d="M7.5 2.8 L11.2 4.6 L7.5 6.4 L3.8 4.6Z" fill="#58afe0"/><path d="M7.5 8 L13.6 4.9 L13.6 10.2 L7.5 13.5Z" fill="#9dd4f2"/><path d="M7.5 8 L1.4 4.9 L1.4 10.2 L7.5 13.5Z" fill="#c3e8fa"/></svg>
<div class="t" style="left:39px;top:386px;;letter-spacing:-0.18px;word-spacing:0.12px">Supplementary Service</div>
<div class="a" style="left:27px;top:47px;width:0;height:74px;border-left:1px dotted #a0a0a0"></div>
<div class="a" style="left:27px;top:207px;width:0;height:42px;border-left:1px dotted #a0a0a0"></div>
<div class="a" style="left:27px;top:271px;width:0;height:42px;border-left:1px dotted #a0a0a0"></div>
</div>
<div class="a" style="left:4px;top:635px;width:232px;height:17px;background:#fff"></div>
<div class="a" style="left:4px;top:635px;width:17px;height:17px;border:1px solid #fff;border-radius:2px;background:linear-gradient(135deg,#cbd8fb,#b4c6f7);box-shadow:inset -1px -1px 0 #9fb3ee"><svg class="a" style="left:0;top:0" width="15" height="15" viewBox="0 0 15 15"><path d="M6 3.5 L10 7.5 L6 11.5" transform="rotate(180 7.5 7.5)" stroke="#4d6185" stroke-width="2" fill="none"/></svg></div>
<div class="a" style="left:218px;top:635px;width:17px;height:17px;border:1px solid #fff;border-radius:2px;background:linear-gradient(135deg,#cbd8fb,#b4c6f7);box-shadow:inset -1px -1px 0 #9fb3ee"><svg class="a" style="left:0;top:0" width="15" height="15" viewBox="0 0 15 15"><path d="M6 3.5 L10 7.5 L6 11.5" transform="rotate(0 7.5 7.5)" stroke="#4d6185" stroke-width="2" fill="none"/></svg></div>
<div class="a" style="left:22px;top:635px;width:178px;height:17px;border:1px solid #fff;border-radius:2px;background:linear-gradient(180deg,#cad8fc,#b9caf8);box-shadow:inset -1px -1px 0 #9fb3ee"></div>
<div class="a" style="left:106px;top:640px;width:1px;height:7px;background:#8ea4e0"></div>
<div class="a" style="left:108px;top:640px;width:1px;height:7px;background:#8ea4e0"></div>
<div class="a" style="left:110px;top:640px;width:1px;height:7px;background:#8ea4e0"></div>
<div class="a" style="left:112px;top:640px;width:1px;height:7px;background:#8ea4e0"></div>
<div class="a" style="left:241px;top:89px;width:783px;height:567px;background:#ebebeb;border:2px solid;border-color:#808074 #fff #fff #808074"></div>
<div class="a" style="left:700px;top:92px;width:289px;height:414px;background:#7b8fdd;border-radius:0 7px 0 0"></div>
<div class="a" style="left:700px;top:92px;width:289px;height:30px;background:linear-gradient(180deg,#8ea2ea 0,#7f96e2 15%,#7a93df 60%,#8299e4 100%);border-radius:0 7px 0 0"></div>
<div class="a" style="left:962px;top:98px;width:21px;height:21px;border:1px solid #e0e4f8;border-radius:3px;background:linear-gradient(135deg,#d8a0a8,#c07080)"><svg class="a" style="left:0;top:0" width="19" height="19" viewBox="0 0 19 19"><path d="M5 5 L14 14 M14 5 L5 14" stroke="#fff" stroke-width="2.2" fill="none"/></svg></div>
<div class="a" style="left:704px;top:122px;width:281px;height:380px;background:#ebebeb"></div>
<div class="a" style="left:704px;top:122px;width:281px;height:25px;background:#ece9d8;border-top:1px solid #fff;border-bottom:1px solid #c5c2b2"></div>
<div class="a" style="left:940px;top:150px;width:42px;height:23px;background:#ece9d8;border:1px solid;border-color:#fff #aca899 #aca899 #fff;box-shadow:inset -1px -1px 0 #d0cdbc"></div>
<div class="a" style="left:966px;top:176px;width:18px;height:325px;background:linear-gradient(90deg,#f3f1ec,#fefefd);border-right:1px solid #9a9a9a"></div>
<div class="a" style="left:968px;top:178px;width:15px;height:15px;border-radius:2px;background:linear-gradient(135deg,#cbd8fb,#b9caf7);box-shadow:0 0 0 1px #fff"><svg class="a" style="left:0;top:0" width="15" height="15" viewBox="0 0 15 15"><path d="M3.5 9.5 L7.5 5.5 L11.5 9.5" transform="rotate(0 7.5 7.5)" stroke="#4d6185" stroke-width="2.2" fill="none"/></svg></div>
<div class="a" style="left:968px;top:195px;width:15px;height:15px;border-radius:2px;background:linear-gradient(90deg,#cbd8fb,#b9caf7);box-shadow:0 0 0 1px #fff"><div class="a" style="left:4px;top:4px;width:7px;height:1px;background:#8ea4ea"></div><div class="a" style="left:4px;top:6px;width:7px;height:1px;background:#8ea4ea"></div><div class="a" style="left:4px;top:8px;width:7px;height:1px;background:#8ea4ea"></div><div class="a" style="left:4px;top:10px;width:7px;height:1px;background:#8ea4ea"></div></div>
<div class="a" style="left:968px;top:467px;width:15px;height:15px;border-radius:2px;background:linear-gradient(135deg,#cbd8fb,#b9caf7);box-shadow:0 0 0 1px #fff"><svg class="a" style="left:0;top:0" width="15" height="15" viewBox="0 0 15 15"><path d="M3.5 9.5 L7.5 5.5 L11.5 9.5" transform="rotate(180 7.5 7.5)" stroke="#4d6185" stroke-width="2.2" fill="none"/></svg></div>
<div class="a" style="left:966px;top:484px;width:18px;height:17px;background:#ece9d8"></div>
<div class="a" style="left:979px;top:488px;width:2px;height:2px;background:#b8b4a0"></div>
<div class="a" style="left:975px;top:492px;width:2px;height:2px;background:#b8b4a0"></div>
<div class="a" style="left:979px;top:492px;width:2px;height:2px;background:#b8b4a0"></div>
<div class="a" style="left:971px;top:496px;width:2px;height:2px;background:#b8b4a0"></div>
<div class="a" style="left:975px;top:496px;width:2px;height:2px;background:#b8b4a0"></div>
<div class="a" style="left:979px;top:496px;width:2px;height:2px;background:#b8b4a0"></div>
<div class="a" style="left:244px;top:92px;width:722px;height:534px;background:#0831d9;border-radius:7px 7px 0 0;background:linear-gradient(90deg,#0831d9,#166aee 3px,#166aee)"></div>
<div class="a xptitle" style="left:244px;top:92px;width:722px;height:30px;border-radius:7px 7px 0 0"></div>
<div class="a" style="left:244px;top:122px;width:4px;height:504px;background:linear-gradient(90deg,#0a3ad8 0,#0a45e0 40%,#0d52ea 100%)"></div>
<div class="a" style="left:962px;top:122px;width:4px;height:504px;background:linear-gradient(90deg,#0a40dc 0,#0830cc 50%,#0420a8 100%)"></div>
<div class="a" style="left:244px;top:622px;width:722px;height:4px;background:linear-gradient(180deg,#0a40dc 0,#0830cc 50%,#0420a8 100%)"></div>
<svg class="a" style="left:250px;top:100px" width="16" height="16" viewBox="0 0 15 15"><path d="M7.5 0.7 L14.3 7.5 L7.5 14.3 L0.7 7.5Z" fill="#fff" stroke="#000" stroke-width="1.4"/><path d="M7.5 4 L11 7.5 L7.5 11 L4 7.5Z" fill="#3a8ad0" stroke="#555" stroke-width="0.8"/></svg>
<div class="t" style="left:270px;top:102px;color:#fff;font-weight:bold;font-size:13px;line-height:16px;height:16px;text-shadow:1px 1px 0 #0a1883;letter-spacing:0">Network Numbering Plan Table(PGM324)</div>
<div class="a" style="left:893px;top:98px;width:21px;height:21px;border:1px solid #fff;border-radius:3px;background:linear-gradient(135deg,#5f8cf0 0,#2a5fe0 45%,#1f4fd0 100%)"><div class="a" style="left:4px;top:12px;width:8px;height:3px;background:#fff"></div></div>
<div class="a" style="left:916px;top:98px;width:21px;height:21px;border:1px solid #86a6f2;border-radius:3px;background:linear-gradient(135deg,#4a78e8 0,#2858d8 45%,#2450cc 100%)"><div class="a" style="left:4px;top:4px;width:11px;height:11px;border:1px solid #7d9cf0;border-top-width:3px"></div></div>
<div class="a" style="left:939px;top:98px;width:21px;height:21px;border:1px solid #fff;border-radius:3px;background:linear-gradient(135deg,#e8876a 0,#d6431f 45%,#c4381a 100%)"><svg class="a" style="left:0;top:0" width="19" height="19" viewBox="0 0 19 19"><path d="M5 5 L14 14 M14 5 L5 14" stroke="#fff" stroke-width="2.2" fill="none"/></svg></div>
<div class="a" style="left:248px;top:122px;width:714px;height:500px;background:#e6e6e6"></div>
<div class="a" style="left:248px;top:122px;width:714px;height:25px;background:#ece9d8;border-top:1px solid #fff;border-bottom:1px solid #c5c2b2"></div>
<div class="a" style="left:252px;top:126px;width:3px;height:18px;border-left:1px solid #fff;border-right:1px solid #aca899"></div>
<div class="a" style="left:960px;top:122px;width:2px;height:25px;background:#fbfaf6"></div>
<svg class="a" style="left:265px;top:127px" width="16" height="16" viewBox="0 0 16 16"><path d="M1 7.5 L7 2 L7 5.5 L15 5.5 L15 9.5 L7 9.5 L7 13Z" fill="#d0d0d0" stroke="#555" stroke-width="1"/></svg>
<div class="t" style="left:281px;top:128px;;letter-spacing:-0.07px"><u>R</u>efresh</div>
<svg class="a" style="left:334px;top:127px" width="16" height="16" viewBox="0 0 16 16"><path d="M1 3 L13 3 L13 14 L1 14Z" fill="#c8c8c8" stroke="#666" stroke-width="1"/><path d="M2 6 L9 6 L9 4 L13 7.5 L9 11 L9 9 L2 9Z" fill="#000"/><path d="M14 2 L14 11 L11 14" stroke="#333" fill="none"/></svg>
<div class="t" style="left:350px;top:128px;;letter-spacing:-0.42px"><u>C</u>lose</div>
<div class="a" style="left:249px;top:179px;width:712px;height:196px;background:#fff;border:1px solid #8c8c8c"></div>
<div class="a" style="left:250px;top:180px;width:693px;height:177px;overflow:hidden;background:#f3f3f3">
<div class="a" style="left:0;top:0;width:693px;height:18px;background:#c4dff0;border-bottom:1px solid #8c8c8c"></div>
<div class="a" style="left:0;top:18px;width:693px;height:18px;background:#d2d2d2"></div>
<div class="a" style="left:0;top:35px;width:693px;height:1px;background:#c6c6c6"></div>
<div class="a" style="left:0;top:53px;width:693px;height:1px;background:#c6c6c6"></div>
<div class="a" style="left:0;top:71px;width:693px;height:1px;background:#c6c6c6"></div>
<div class="a" style="left:0;top:89px;width:693px;height:1px;background:#c6c6c6"></div>
<div class="a" style="left:0;top:107px;width:693px;height:1px;background:#c6c6c6"></div>
<div class="a" style="left:0;top:125px;width:693px;height:1px;background:#c6c6c6"></div>
<div class="a" style="left:0;top:143px;width:693px;height:1px;background:#c6c6c6"></div>
<div class="a" style="left:0;top:161px;width:693px;height:1px;background:#c6c6c6"></div>
<div class="a" style="left:0;top:179px;width:693px;height:1px;background:#c6c6c6"></div>
<div class="a" style="left:0;top:197px;width:693px;height:1px;background:#c6c6c6"></div>
<div class="a" style="left:40px;top:0;width:1px;height:177px;background:#c0c0c0"></div>
<div class="a" style="left:40px;top:0;width:1px;height:18px;background:#8c8c8c"></div>
<div class="a" style="left:0px;top:0;width:1px;height:17px;background:#e8f4fb"></div>
<div class="t" style="left:5px;top:3px;width:37px;overflow:hidden;letter-spacing:0.22px">Index</div>
<div class="a" style="left:113px;top:0;width:1px;height:177px;background:#c0c0c0"></div>
<div class="a" style="left:113px;top:0;width:1px;height:18px;background:#8c8c8c"></div>
<div class="a" style="left:41px;top:0;width:1px;height:17px;background:#e8f4fb"></div>
<div class="t" style="left:44px;top:3px;width:69px;overflow:hidden;letter-spacing:-0.32px;word-spacing:0.26px">System Usage</div>
<div class="a" style="left:210px;top:0;width:1px;height:177px;background:#c0c0c0"></div>
<div class="a" style="left:210px;top:0;width:1px;height:18px;background:#8c8c8c"></div>
<div class="a" style="left:114px;top:0;width:1px;height:17px;background:#e8f4fb"></div>
<div class="t" style="left:117px;top:3px;width:93px;overflow:hidden;letter-spacing:-0.58px;word-spacing:0.52px">NUM Plan Code</div>
<div class="a" style="left:307px;top:0;width:1px;height:177px;background:#c0c0c0"></div>
<div class="a" style="left:307px;top:0;width:1px;height:18px;background:#8c8c8c"></div>
<div class="a" style="left:211px;top:0;width:1px;height:17px;background:#e8f4fb"></div>
<div class="t" style="left:214px;top:3px;width:93px;overflow:hidden;letter-spacing:-0.1px;word-spacing:0.04px">CPN/IP Info</div>
<div class="a" style="left:377px;top:0;width:1px;height:177px;background:#c0c0c0"></div>
<div class="a" style="left:377px;top:0;width:1px;height:18px;background:#8c8c8c"></div>
<div class="a" style="left:308px;top:0;width:1px;height:17px;background:#e8f4fb"></div>
<div class="t" style="left:311px;top:3px;width:66px;overflow:hidden;letter-spacing:-0.61px;word-spacing:0.55px">NET CO Group</div>
<div class="a" style="left:444px;top:0;width:1px;height:177px;background:#c0c0c0"></div>
<div class="a" style="left:444px;top:0;width:1px;height:18px;background:#8c8c8c"></div>
<div class="a" style="left:378px;top:0;width:1px;height:17px;background:#e8f4fb"></div>
<div class="t" style="left:381px;top:3px;width:63px;overflow:hidden;letter-spacing:-0.85px;word-spacing:0.79px">ALT SPD Bin</div>
<div class="a" style="left:523px;top:0;width:1px;height:177px;background:#c0c0c0"></div>
<div class="a" style="left:523px;top:0;width:1px;height:18px;background:#8c8c8c"></div>
<div class="a" style="left:445px;top:0;width:1px;height:17px;background:#e8f4fb"></div>
<div class="t" style="left:448px;top:3px;width:75px;overflow:hidden;letter-spacing:-0.95px;word-spacing:0.89px">DEST MPB IP</div>
<div class="a" style="left:592px;top:0;width:1px;height:177px;background:#c0c0c0"></div>
<div class="a" style="left:592px;top:0;width:1px;height:18px;background:#8c8c8c"></div>
<div class="a" style="left:524px;top:0;width:1px;height:17px;background:#e8f4fb"></div>
<div class="t" style="left:527px;top:3px;width:65px;overflow:hidden;letter-spacing:-0.13px;word-spacing:0.07px">Digit Repeat</div>
<div class="a" style="left:685px;top:0;width:1px;height:177px;background:#c0c0c0"></div>
<div class="a" style="left:685px;top:0;width:1px;height:18px;background:#8c8c8c"></div>
<div class="a" style="left:593px;top:0;width:1px;height:17px;background:#e8f4fb"></div>
<div class="t" style="left:596px;top:3px;width:89px;overflow:hidden;letter-spacing:-0.49px;word-spacing:0.43px">CO ATD Code CLI</div>
<div class="a" style="left:694px;top:0;width:1px;height:177px;background:#c0c0c0"></div>
<div class="a" style="left:694px;top:0;width:1px;height:18px;background:#8c8c8c"></div>
<div class="a" style="left:686px;top:0;width:1px;height:17px;background:#e8f4fb"></div>
<div class="t" style="left:689px;top:3px;width:5px;overflow:hidden;letter-spacing:-0.94px">N</div>
<div class="t" style="left:0;top:21px;width:40px;text-align:center;letter-spacing:0;color:#128080;">0</div>
<div class="t" style="left:44px;top:21px;width:69px;overflow:hidden;color:#128080;letter-spacing:-1.0px;">NET</div>
<div class="t" style="left:214px;top:21px;width:93px;overflow:hidden;color:#128080;letter-spacing:0.21px;word-spacing:-0.27px;">95.66.162.59 / 95.</div>
<div class="t" style="left:311px;top:21px;width:66px;overflow:hidden;color:#128080;letter-spacing:-0.12px;">9</div>
<div class="t" style="left:448px;top:21px;width:75px;overflow:hidden;color:#128080;letter-spacing:0.34px;">0.0.0.0</div>
<div class="t" style="left:527px;top:21px;width:65px;overflow:hidden;color:#128080;letter-spacing:-0.75px;">ON</div>
<div class="t" style="left:596px;top:21px;width:89px;overflow:hidden;color:#128080;letter-spacing:-0.75px;">ON</div>
<div class="t" style="left:689px;top:21px;width:5px;overflow:hidden;color:#128080;letter-spacing:-0.94px;">N</div>
<div class="t" style="left:0;top:39px;width:40px;text-align:center;letter-spacing:0;">1</div>
<div class="t" style="left:44px;top:39px;width:69px;overflow:hidden;letter-spacing:-1.0px;">NET</div>
<div class="t" style="left:214px;top:39px;width:93px;overflow:hidden;letter-spacing:0.41px;word-spacing:-0.47px;">0.0.0.0 / 0.0.0.0 /</div>
<div class="t" style="left:448px;top:39px;width:75px;overflow:hidden;letter-spacing:0.34px;">0.0.0.0</div>
<div class="t" style="left:527px;top:39px;width:65px;overflow:hidden;letter-spacing:-0.66px;">OFF</div>
<div class="t" style="left:596px;top:39px;width:89px;overflow:hidden;letter-spacing:-0.66px;">OFF</div>
<div class="t" style="left:689px;top:39px;width:5px;overflow:hidden;letter-spacing:-0.94px;">N</div>
<div class="t" style="left:0;top:57px;width:40px;text-align:center;letter-spacing:0;">2</div>
<div class="t" style="left:44px;top:57px;width:69px;overflow:hidden;letter-spacing:-1.0px;">NET</div>
<div class="t" style="left:214px;top:57px;width:93px;overflow:hidden;letter-spacing:0.41px;word-spacing:-0.47px;">0.0.0.0 / 0.0.0.0 /</div>
<div class="t" style="left:448px;top:57px;width:75px;overflow:hidden;letter-spacing:0.34px;">0.0.0.0</div>
<div class="t" style="left:527px;top:57px;width:65px;overflow:hidden;letter-spacing:-0.66px;">OFF</div>
<div class="t" style="left:596px;top:57px;width:89px;overflow:hidden;letter-spacing:-0.66px;">OFF</div>
<div class="t" style="left:689px;top:57px;width:5px;overflow:hidden;letter-spacing:-0.94px;">N</div>
<div class="t" style="left:0;top:75px;width:40px;text-align:center;letter-spacing:0;">3</div>
<div class="t" style="left:44px;top:75px;width:69px;overflow:hidden;letter-spacing:-1.0px;">NET</div>
<div class="t" style="left:214px;top:75px;width:93px;overflow:hidden;letter-spacing:0.41px;word-spacing:-0.47px;">0.0.0.0 / 0.0.0.0 /</div>
<div class="t" style="left:448px;top:75px;width:75px;overflow:hidden;letter-spacing:0.34px;">0.0.0.0</div>
<div class="t" style="left:527px;top:75px;width:65px;overflow:hidden;letter-spacing:-0.66px;">OFF</div>
<div class="t" style="left:596px;top:75px;width:89px;overflow:hidden;letter-spacing:-0.66px;">OFF</div>
<div class="t" style="left:689px;top:75px;width:5px;overflow:hidden;letter-spacing:-0.94px;">N</div>
<div class="t" style="left:0;top:93px;width:40px;text-align:center;letter-spacing:0;">4</div>
<div class="t" style="left:44px;top:93px;width:69px;overflow:hidden;letter-spacing:-1.0px;">NET</div>
<div class="t" style="left:214px;top:93px;width:93px;overflow:hidden;letter-spacing:0.41px;word-spacing:-0.47px;">0.0.0.0 / 0.0.0.0 /</div>
<div class="t" style="left:448px;top:93px;width:75px;overflow:hidden;letter-spacing:0.34px;">0.0.0.0</div>
<div class="t" style="left:527px;top:93px;width:65px;overflow:hidden;letter-spacing:-0.66px;">OFF</div>
<div class="t" style="left:596px;top:93px;width:89px;overflow:hidden;letter-spacing:-0.66px;">OFF</div>
<div class="t" style="left:689px;top:93px;width:5px;overflow:hidden;letter-spacing:-0.94px;">N</div>
<div class="t" style="left:0;top:111px;width:40px;text-align:center;letter-spacing:0;">5</div>
<div class="t" style="left:44px;top:111px;width:69px;overflow:hidden;letter-spacing:-1.0px;">NET</div>
<div class="t" style="left:214px;top:111px;width:93px;overflow:hidden;letter-spacing:0.41px;word-spacing:-0.47px;">0.0.0.0 / 0.0.0.0 /</div>
<div class="t" style="left:448px;top:111px;width:75px;overflow:hidden;letter-spacing:0.34px;">0.0.0.0</div>
<div class="t" style="left:527px;top:111px;width:65px;overflow:hidden;letter-spacing:-0.66px;">OFF</div>
<div class="t" style="left:596px;top:111px;width:89px;overflow:hidden;letter-spacing:-0.66px;">OFF</div>
<div class="t" style="left:689px;top:111px;width:5px;overflow:hidden;letter-spacing:-0.94px;">N</div>
<div class="t" style="left:0;top:129px;width:40px;text-align:center;letter-spacing:0;">6</div>
<div class="t" style="left:44px;top:129px;width:69px;overflow:hidden;letter-spacing:-1.0px;">NET</div>
<div class="t" style="left:214px;top:129px;width:93px;overflow:hidden;letter-spacing:0.41px;word-spacing:-0.47px;">0.0.0.0 / 0.0.0.0 /</div>
<div class="t" style="left:448px;top:129px;width:75px;overflow:hidden;letter-spacing:0.34px;">0.0.0.0</div>
<div class="t" style="left:527px;top:129px;width:65px;overflow:hidden;letter-spacing:-0.66px;">OFF</div>
<div class="t" style="left:596px;top:129px;width:89px;overflow:hidden;letter-spacing:-0.66px;">OFF</div>
<div class="t" style="left:689px;top:129px;width:5px;overflow:hidden;letter-spacing:-0.94px;">N</div>
<div class="t" style="left:0;top:147px;width:40px;text-align:center;letter-spacing:0;">7</div>
<div class="t" style="left:44px;top:147px;width:69px;overflow:hidden;letter-spacing:-1.0px;">NET</div>
<div class="t" style="left:214px;top:147px;width:93px;overflow:hidden;letter-spacing:0.41px;word-spacing:-0.47px;">0.0.0.0 / 0.0.0.0 /</div>
<div class="t" style="left:448px;top:147px;width:75px;overflow:hidden;letter-spacing:0.34px;">0.0.0.0</div>
<div class="t" style="left:527px;top:147px;width:65px;overflow:hidden;letter-spacing:-0.66px;">OFF</div>
<div class="t" style="left:596px;top:147px;width:89px;overflow:hidden;letter-spacing:-0.66px;">OFF</div>
<div class="t" style="left:689px;top:147px;width:5px;overflow:hidden;letter-spacing:-0.94px;">N</div>
<div class="t" style="left:0;top:165px;width:40px;text-align:center;letter-spacing:0;">8</div>
<div class="t" style="left:44px;top:165px;width:69px;overflow:hidden;letter-spacing:-1.0px;">NET</div>
<div class="t" style="left:214px;top:165px;width:93px;overflow:hidden;letter-spacing:0.41px;word-spacing:-0.47px;">0.0.0.0 / 0.0.0.0 /</div>
<div class="t" style="left:448px;top:165px;width:75px;overflow:hidden;letter-spacing:0.34px;">0.0.0.0</div>
<div class="t" style="left:527px;top:165px;width:65px;overflow:hidden;letter-spacing:-0.66px;">OFF</div>
<div class="t" style="left:596px;top:165px;width:89px;overflow:hidden;letter-spacing:-0.66px;">OFF</div>
<div class="t" style="left:689px;top:165px;width:5px;overflow:hidden;letter-spacing:-0.94px;">N</div>
</div>
<div class="a" style="left:943px;top:180px;width:17px;height:177px;background:linear-gradient(90deg,#f3f1ec,#fefefd)"></div>
<div class="a" style="left:944px;top:181px;width:15px;height:15px;border-radius:2px;background:linear-gradient(135deg,#cbd8fb,#b9caf7);box-shadow:0 0 0 1px #fff"><svg class="a" style="left:0;top:0" width="15" height="15" viewBox="0 0 15 15"><path d="M3.5 9.5 L7.5 5.5 L11.5 9.5" transform="rotate(0 7.5 7.5)" stroke="#4d6185" stroke-width="2.2" fill="none"/></svg></div>
<div class="a" style="left:944px;top:198px;width:15px;height:15px;border-radius:2px;background:linear-gradient(90deg,#cbd8fb,#b9caf7);box-shadow:0 0 0 1px #fff"><div class="a" style="left:4px;top:4px;width:7px;height:1px;background:#8ea4ea"></div><div class="a" style="left:4px;top:6px;width:7px;height:1px;background:#8ea4ea"></div><div class="a" style="left:4px;top:8px;width:7px;height:1px;background:#8ea4ea"></div><div class="a" style="left:4px;top:10px;width:7px;height:1px;background:#8ea4ea"></div></div>
<div class="a" style="left:944px;top:341px;width:15px;height:15px;border-radius:2px;background:linear-gradient(135deg,#cbd8fb,#b9caf7);box-shadow:0 0 0 1px #fff"><svg class="a" style="left:0;top:0" width="15" height="15" viewBox="0 0 15 15"><path d="M3.5 9.5 L7.5 5.5 L11.5 9.5" transform="rotate(180 7.5 7.5)" stroke="#4d6185" stroke-width="2.2" fill="none"/></svg></div>
<div class="a" style="left:250px;top:357px;width:693px;height:17px;background:linear-gradient(180deg,#f3f1ec,#fefefd)"></div>
<div class="a" style="left:943px;top:357px;width:17px;height:17px;background:#ece9d8"></div>
<div class="a" style="left:251px;top:358px;width:15px;height:15px;border-radius:2px;background:linear-gradient(135deg,#cbd8fb,#b9caf7);box-shadow:0 0 0 1px #fff"><svg class="a" style="left:0;top:0" width="15" height="15" viewBox="0 0 15 15"><path d="M3.5 9.5 L7.5 5.5 L11.5 9.5" transform="rotate(270 7.5 7.5)" stroke="#4d6185" stroke-width="2.2" fill="none"/></svg></div>
<div class="a" style="left:927px;top:358px;width:15px;height:15px;border-radius:2px;background:linear-gradient(135deg,#cbd8fb,#b9caf7);box-shadow:0 0 0 1px #fff"><svg class="a" style="left:0;top:0" width="15" height="15" viewBox="0 0 15 15"><path d="M3.5 9.5 L7.5 5.5 L11.5 9.5" transform="rotate(90 7.5 7.5)" stroke="#4d6185" stroke-width="2.2" fill="none"/></svg></div>
<div class="a" style="left:268px;top:358px;width:15px;height:15px;border-radius:2px;background:linear-gradient(180deg,#cbd8fb,#b9caf7);box-shadow:0 0 0 1px #fff"><div class="a" style="left:4px;top:4px;width:1px;height:7px;background:#8ea4ea"></div><div class="a" style="left:6px;top:4px;width:1px;height:7px;background:#8ea4ea"></div><div class="a" style="left:8px;top:4px;width:1px;height:7px;background:#8ea4ea"></div><div class="a" style="left:10px;top:4px;width:1px;height:7px;background:#8ea4ea"></div></div>
<div class="a" style="left:248px;top:376px;width:714px;height:18px;background:#c8c8c8"></div>
<div class="t" style="left:248px;top:378px;font-weight:bold;width:714px;text-align:center;letter-spacing:0.6px">Update Tool</div>
<div class="t" style="left:259px;top:400px;font-weight:bold;letter-spacing:0.7px">Index</div>
<div class="t" style="left:312px;top:400px;;letter-spacing:-0.12px">0</div>
<div class="t" style="left:359px;top:400px;;letter-spacing:-0.43px;word-spacing:0.37px">ISDN NET CO Group - CPN / VOIB NET CO Group - IP Info</div>
<div class="grp" style="left:257px;top:419px;width:594px;height:198px;"></div>
<div class="row" style="left:262px;top:424px;width:308px;height:24px;"></div>
<div class="t" style="left:268px;top:430px;;letter-spacing:-0.32px;word-spacing:0.26px">System Usage</div>
<div class="a sunk" style="left:383px;top:426px;width:103px;height:20px;"><div class="t" style="left:2px;top:2px;letter-spacing:-1.0px">NET</div><div class="cbb" style="left:84px;top:1px"></div></div>
<div class="row" style="left:262px;top:451px;width:308px;height:24px;"></div>
<div class="t" style="left:268px;top:457px;;letter-spacing:-0.58px;word-spacing:0.52px">NUM Plan Code</div>
<div class="a sunk" style="left:384px;top:453px;width:102px;height:20px;"><div class="t" style="left:2px;top:2px;letter-spacing:0px"></div></div>
<div class="t" style="left:491px;top:457px;;letter-spacing:-0.28px;word-spacing:0.22px">MAX length 16</div>
<div class="row" style="left:262px;top:478px;width:308px;height:78px;"></div>
<div class="a" style="left:267px;top:481px;width:100px;height:20px;background:#c0c0c0;border-top:1px solid #d0d0d0;border-bottom:1px solid #aaa79a;border-right:1px solid #b0b0a8"></div>
<div class="a" style="left:276px;top:489px;width:12px;height:9px;background:#fff;border-left:1px solid #808080;border-top:1px solid #808080"></div>
<div class="t" style="left:306px;top:485px;;letter-spacing:-1.07px">CPN</div>
<div class="a sunk" style="left:384px;top:482px;width:102px;height:20px;"><div class="t" style="left:2px;top:2px;letter-spacing:0px"></div></div>
<div class="t" style="left:491px;top:484px;;letter-spacing:-0.28px;word-spacing:0.22px">MAX length 16</div>
<div class="a" style="left:265px;top:505px;width:301px;height:1px;background:#000"></div>
<div class="a" style="left:267px;top:509px;width:100px;height:20px;background:#c0c0c0;border-top:1px solid #d0d0d0;border-bottom:1px solid #aaa79a;border-right:1px solid #b0b0a8"></div>
<div class="a" style="left:276px;top:516px;width:12px;height:9px;background:#fff;border-left:1px solid #808080;border-top:1px solid #808080"></div>
<svg class="a" style="left:277px;top:516px" width="10" height="9" viewBox="0 0 10 9"><path d="M1.5 4 L4 6.5 L8.5 1.5" stroke="#000" stroke-width="1.8" fill="none"/></svg>
<div class="t" style="left:299px;top:512px;;letter-spacing:0.21px;word-spacing:-0.27px">IP Info</div>
<div class="t" style="left:371px;top:513px;;letter-spacing:0.41px">1.</div>
<div class="a sunk" style="left:384px;top:510px;width:83px;height:19px;"><div class="t" style="left:2px;top:1px;letter-spacing:0.15px">95.66.162.59</div></div>
<div class="t" style="left:470px;top:513px;;letter-spacing:0.41px">2.</div>
<div class="a sunk" style="left:482px;top:510px;width:83px;height:19px;"><div class="t" style="left:2px;top:1px;letter-spacing:0.15px">95.66.162.59</div></div>
<div class="t" style="left:371px;top:535px;;letter-spacing:0.41px">3.</div>
<div class="a sunk" style="left:384px;top:531px;width:83px;height:19px;"><div class="t" style="left:2px;top:1px;letter-spacing:0.15px">95.66.162.59</div></div>
<div class="t" style="left:470px;top:535px;;letter-spacing:0.41px">4.</div>
<div class="a sunk" style="left:482px;top:531px;width:83px;height:19px;"><div class="t" style="left:2px;top:1px;letter-spacing:0.15px">95.66.162.59</div></div>
<div class="row" style="left:262px;top:558px;width:308px;height:25px;"></div>
<div class="t" style="left:268px;top:564px;;letter-spacing:-0.15px;word-spacing:0.09px">Net Firewall Route</div>
<div class="a sunk" style="left:485px;top:561px;width:79px;height:20px;"><div class="t" style="left:2px;top:2px;letter-spacing:-0.75px">NO</div><div class="cbb" style="left:60px;top:1px"></div></div>
<div class="row" style="left:263px;top:585px;width:307px;height:25px;"></div>
<div class="t" style="left:269px;top:591px;;letter-spacing:-0.59px;word-spacing:0.53px">SMDR Dial Hidden</div>
<div class="a sunk" style="left:485px;top:588px;width:79px;height:20px;"><div class="t" style="left:2px;top:2px;letter-spacing:-0.75px">NO</div><div class="cbb" style="left:60px;top:1px"></div></div>
<div class="row" style="left:574px;top:424px;width:272px;height:24px;"></div>
<div class="t" style="left:580px;top:430px;;letter-spacing:-0.61px;word-spacing:0.55px">NET CO Group</div>
<div class="a sunk" style="left:696px;top:426px;width:83px;height:20px;"><div class="t" style="left:2px;top:2px;letter-spacing:-0.12px">9</div></div>
<div class="t" style="left:784px;top:430px;;letter-spacing:-0.03px;word-spacing:-0.03px">00 - 24</div>
<div class="row" style="left:574px;top:451px;width:272px;height:24px;"></div>
<div class="t" style="left:580px;top:457px;;letter-spacing:-0.85px;word-spacing:0.79px">ALT SPD Bin</div>
<div class="a sunk" style="left:696px;top:453px;width:83px;height:20px;"><div class="t" style="left:2px;top:2px;letter-spacing:0px"></div></div>
<div class="row" style="left:574px;top:478px;width:272px;height:24px;"></div>
<div class="t" style="left:580px;top:484px;;letter-spacing:-0.95px;word-spacing:0.89px">DEST MPB IP</div>
<div class="a sunk" style="left:696px;top:481px;width:106px;height:20px;"><div class="t" style="left:2px;top:2px;letter-spacing:0.34px">0.0.0.0</div></div>
<div class="row" style="left:574px;top:505px;width:272px;height:25px;"></div>
<div class="t" style="left:580px;top:511px;;letter-spacing:-0.13px;word-spacing:0.07px">Digit Repeat</div>
<div class="a sunk" style="left:760px;top:507px;width:79px;height:20px;"><div class="t" style="left:2px;top:2px;letter-spacing:-0.75px">ON</div><div class="cbb" style="left:60px;top:1px"></div></div>
<div class="row" style="left:574px;top:532px;width:272px;height:25px;"></div>
<div class="t" style="left:580px;top:538px;;letter-spacing:-0.49px;word-spacing:0.43px">CO ATD Code CLI</div>
<div class="a sunk" style="left:760px;top:534px;width:79px;height:20px;"><div class="t" style="left:2px;top:2px;letter-spacing:-0.75px">ON</div><div class="cbb" style="left:60px;top:1px"></div></div>
<div class="row" style="left:574px;top:559px;width:272px;height:25px;"></div>
<div class="t" style="left:580px;top:565px;;letter-spacing:-0.29px;word-spacing:0.23px">CO-to-CO Auth Code COS Usage</div>
<div class="a sunk" style="left:760px;top:561px;width:79px;height:20px;"><div class="t" style="left:2px;top:2px;letter-spacing:-0.75px">NO</div><div class="cbb" style="left:60px;top:1px"></div></div>
<div class="a" style="left:862px;top:417px;width:60px;height:21px;border:1px solid #000"><div class="btn" style="left:0;top:0;width:58px;height:19px;line-height:16px"><span style="display:inline-block;border:1px dotted #000;width:50px;height:13px;line-height:11px;margin-top:2px;letter-spacing:-0.3px">Update</span></div></div>
<div class="btn" style="left:862px;top:444px;width:60px;height:21px;letter-spacing:-0.3px;text-indent:-1px">Delete</div>
<div class="btn" style="left:862px;top:473px;width:60px;height:21px;letter-spacing:-0.3px;text-indent:-1px">Close</div>
<div class="a" style="left:244px;top:626px;width:158px;height:28px;background:linear-gradient(180deg,#8ea2ea 0,#7a93df 40%,#7089dc 100%);border-radius:3px 0 7px 7px"></div>
<svg class="a" style="left:248px;top:630px" width="16" height="16" viewBox="0 0 15 15"><path d="M7.5 0.7 L14.3 7.5 L7.5 14.3 L0.7 7.5Z" fill="#fff" stroke="#000" stroke-width="1.4"/><path d="M7.5 4 L11 7.5 L7.5 11 L4 7.5Z" fill="#3a8ad0" stroke="#555" stroke-width="0.8"/></svg>
<div class="t" style="left:267px;top:631px;color:#d3dcf7;font-weight:bold;font-size:13px;line-height:16px;height:16px;letter-spacing:0.3px">Site Inf…</div>
<div class="a" style="left:331px;top:628px;width:21px;height:21px;border:1px solid #a9bdf3;border-radius:3px;background:linear-gradient(135deg,#6a90ea 0,#4770da 45%,#3c64d0 100%)"><div class="a" style="left:7px;top:4px;width:8px;height:7px;border:1px solid #fff;border-top-width:2px"></div><div class="a" style="left:4px;top:7px;width:8px;height:7px;border:1px solid #fff;border-top-width:2px;background:#4770da"></div></div>
<div class="a" style="left:354px;top:628px;width:21px;height:21px;border:1px solid #8fa4e8;border-radius:3px;background:linear-gradient(135deg,#7a94e2 0,#6a84da 100%)"><div class="a" style="left:4px;top:4px;width:11px;height:11px;border:1px solid #8da2ea;border-top-width:3px"></div></div>
<div class="a" style="left:377px;top:628px;width:21px;height:21px;border:1px solid #e0e4f8;border-radius:3px;background:linear-gradient(135deg,#d8a0a8,#c07080)"><svg class="a" style="left:0;top:0" width="19" height="19" viewBox="0 0 19 19"><path d="M5 5 L14 14 M14 5 L5 14" stroke="#fff" stroke-width="2.2" fill="none"/></svg></div>
<div class="a" style="left:0px;top:654px;width:1024px;height:24px;background:#ece9d8"></div>
<div class="a" style="left:0px;top:654px;width:241px;height:2px;background:#716f64"></div>
<div class="a" style="left:0px;top:658px;width:200px;height:16px;border:1px solid;border-color:#aca899 #fff #fff #aca899"></div>
<div class="a" style="left:202px;top:658px;width:248px;height:16px;border:1px solid;border-color:#aca899 #fff #fff #aca899"></div>
<div class="a" style="left:452px;top:658px;width:572px;height:16px;border:1px solid;border-color:#aca899 #fff #fff #aca899"></div>
<div class="t" style="left:204px;top:659px;;letter-spacing:0.17px">192.168.1.1</div>
<div class="t" style="left:454px;top:659px;;letter-spacing:-0.92px;word-spacing:0.86px">CONNECT OK</div>
<div class="a" style="left:0px;top:674px;width:1024px;height:3px;background:#fdfdfc"></div>
<div class="a" style="left:0px;top:677px;width:1024px;height:61px;background:#fff;border-top:3px solid #aca899;border-left:3px solid #aca899"></div>
<div class="a" style="left:3px;top:680px;width:1018px;height:12px;background:#c0c0c0"></div>
<div class="t" style="left:3px;top:679px;font-weight:bold;color:#00008b;width:1018px;text-align:center;letter-spacing:-0.3px;line-height:13px;height:13px">MESSAGE</div>
<div class="t" style="left:2px;top:693px;letter-spacing:-0.1px">[ Message ] Language ID is &nbsp;: 1049</div>
<div class="t" style="left:2px;top:707px;color:#0000c8;letter-spacing:-0.1px">[ Message ] Networking CO Line Attribute(PGM322) : Update Success</div>
<div class="t" style="left:2px;top:721px;color:#0000c8;letter-spacing:-0.1px">[ Message ] Networking CO Line Attribute(PGM322) : Update Success</div>
<div class="a" style="left:1005px;top:692px;width:17px;height:46px;background:linear-gradient(90deg,#f3f1ec,#fefefd)"></div>
<div class="a" style="left:1006px;top:693px;width:15px;height:15px;border-radius:2px;background:linear-gradient(135deg,#cbd8fb,#b9caf7);box-shadow:0 0 0 1px #fff"><svg class="a" style="left:0;top:0" width="15" height="15" viewBox="0 0 15 15"><path d="M3.5 9.5 L7.5 5.5 L11.5 9.5" transform="rotate(0 7.5 7.5)" stroke="#4d6185" stroke-width="2.2" fill="none"/></svg></div>
<div class="a" style="left:1006px;top:724px;width:15px;height:15px;border-radius:2px;background:linear-gradient(135deg,#cbd8fb,#b9caf7);box-shadow:0 0 0 1px #fff"><svg class="a" style="left:0;top:0" width="15" height="15" viewBox="0 0 15 15"><path d="M3.5 9.5 L7.5 5.5 L11.5 9.5" transform="rotate(180 7.5 7.5)" stroke="#4d6185" stroke-width="2.2" fill="none"/></svg></div>
<div class="a" style="left:1006px;top:711px;width:15px;height:8px;border-radius:2px;background:linear-gradient(90deg,#cbd8fb,#b9caf7);box-shadow:0 0 0 1px #fff"></div>
<div class="a" style="left:0px;top:738px;width:1024px;height:30px;background:linear-gradient(180deg,#3f8cf3 0,#2a6fe6 8%,#245edb 20%,#2562df 50%,#2663e0 85%,#1f4fc0 100%)"></div>
<div class="a" style="left:0px;top:738px;width:98px;height:30px;background:linear-gradient(180deg,#5eac56 0,#3c9a3c 10%,#359235 50%,#2f8a2f 90%,#236e23 100%);border-radius:0 12px 12px 0;box-shadow:1px 0 2px #1a3a8a"></div>
<svg class="a" style="left:9px;top:743px" width="22" height="20" viewBox="0 0 20 18"><path d="M2 3 Q5 1 9 3 L8 8 Q5 6 1 8Z" fill="#e8542c"/><path d="M10.5 3 Q14 5 18 3 L17 8 Q13 10 9.5 8Z" fill="#7ac142"/><path d="M1 9.5 Q4 7.5 8 9.5 L7 15 Q4 13 0 15Z" fill="#3c8ee8"/><path d="M9.3 9.5 Q13 11.5 16.8 9.5 L16 15 Q12 17 8.5 15Z" fill="#f8c620"/></svg>
<div class="t" style="left:35px;top:743px;color:#fff;font-weight:bold;font-style:italic;font-size:17px;line-height:20px;height:20px;text-shadow:1px 1px 1px #1a4a1a;letter-spacing:-1.1px">пуск</div>
<div class="a" style="left:105px;top:742px;width:130px;height:23px;background:#1e52b7;box-shadow:inset 1px 1px 1px #133a8c;border-radius:3px"></div>
<div class="t" style="left:136px;top:746px;color:#fff;letter-spacing:-0.81px;word-spacing:0.75px">LDK PCADMIN</div>
<svg class="a" style="left:116px;top:746px" width="15" height="15" viewBox="0 0 15 15"><path d="M7.5 0.7 L14.3 7.5 L7.5 14.3 L0.7 7.5Z" fill="#fff" stroke="#000" stroke-width="1.4"/><path d="M7.5 4 L11 7.5 L7.5 11 L4 7.5Z" fill="#3a8ad0" stroke="#555" stroke-width="0.8"/></svg>
<div class="a" style="left:237px;top:742px;width:130px;height:23px;background:linear-gradient(180deg,#5a9af8 0,#3c81f3 12%,#3a7df0 80%,#3273e6 100%);border-radius:3px;box-shadow:inset 1px 1px 0 #6aa6fa, inset -1px -1px 0 #2a5fd0"></div>
<div class="t" style="left:266px;top:746px;color:#fff;letter-spacing:-0.38px">programming-rs…</div>
<div class="a" style="left:369px;top:742px;width:130px;height:23px;background:linear-gradient(180deg,#5a9af8 0,#3c81f3 12%,#3a7df0 80%,#3273e6 100%);border-radius:3px;box-shadow:inset 1px 1px 0 #6aa6fa, inset -1px -1px 0 #2a5fd0"></div>
<div class="t" style="left:398px;top:746px;color:#fff;letter-spacing:-0.17px">installation-rs.p…</div>
<div class="a" style="left:501px;top:742px;width:130px;height:23px;background:linear-gradient(180deg,#5a9af8 0,#3c81f3 12%,#3a7df0 80%,#3273e6 100%);border-radius:3px;box-shadow:inset 1px 1px 0 #6aa6fa, inset -1px -1px 0 #2a5fd0"></div>
<div class="t" style="left:530px;top:746px;color:#fff;letter-spacing:-0.55px;word-spacing:0.49px">Total Command…</div>
<div class="a" style="left:633px;top:742px;width:130px;height:23px;background:linear-gradient(180deg,#5a9af8 0,#3c81f3 12%,#3a7df0 80%,#3273e6 100%);border-radius:3px;box-shadow:inset 1px 1px 0 #6aa6fa, inset -1px -1px 0 #2a5fd0"></div>
<div class="t" style="left:662px;top:746px;color:#fff;letter-spacing:-0.48px">ipLDK-60</div>
<div class="a" style="left:765px;top:742px;width:130px;height:23px;background:linear-gradient(180deg,#5a9af8 0,#3c81f3 12%,#3a7df0 80%,#3273e6 100%);border-radius:3px;box-shadow:inset 1px 1px 0 #6aa6fa, inset -1px -1px 0 #2a5fd0"></div>
<div class="t" style="left:794px;top:746px;color:#fff;letter-spacing:-0.12px;word-spacing:0.06px">4 - Paint</div>
<svg class="a" style="left:246px;top:745px" width="16" height="17" viewBox="0 0 16 17"><path d="M3 1 L12 1 L15 4 L15 16 L3 16Z" fill="#fff" stroke="#999" stroke-width="0.8"/><rect x="0" y="2" width="9" height="4" fill="#d8181c"/><path d="M5 14 Q8 10 8.5 6 Q9 10 13 12 Q8 11 5 14Z" fill="none" stroke="#d8181c" stroke-width="1.2"/></svg>
<svg class="a" style="left:378px;top:745px" width="16" height="17" viewBox="0 0 16 17"><path d="M3 1 L12 1 L15 4 L15 16 L3 16Z" fill="#fff" stroke="#999" stroke-width="0.8"/><rect x="0" y="2" width="9" height="4" fill="#d8181c"/><path d="M5 14 Q8 10 8.5 6 Q9 10 13 12 Q8 11 5 14Z" fill="none" stroke="#d8181c" stroke-width="1.2"/></svg>
<svg class="a" style="left:510px;top:746px" width="15" height="15" viewBox="0 0 15 15"><rect x="0.5" y="1" width="12" height="12" rx="2" fill="#d8e8f0" stroke="#7090a8"/><circle cx="8" cy="8" r="5" fill="#30a890" stroke="#fff"/><circle cx="8" cy="8" r="2" fill="#e8f0f0"/></svg>
<svg class="a" style="left:642px;top:745px" width="16" height="16" viewBox="0 0 16 16"><circle cx="8" cy="8" r="7.5" fill="#d0102c"/><circle cx="8" cy="8" r="5" fill="none" stroke="#fff" stroke-width="1"/><path d="M8 4 L8 10 L10 10" stroke="#fff" fill="none"/></svg>
<svg class="a" style="left:775px;top:744px" width="15" height="19" viewBox="0 0 15 19"><path d="M3 8 L12 8 L10.5 18 L4.5 18Z" fill="#c8b070" stroke="#806830"/><path d="M4 8 L2 1 M6 8 L6 0 M9 8 L10 1 M11 8 L13 2" stroke-width="1.6" stroke="#d04020"/><path d="M6 8 L6 0" stroke="#30a040" stroke-width="1.6"/><path d="M9 8 L10 1" stroke="#e0a020" stroke-width="1.6"/></svg>
<div class="a" style="left:905px;top:745px;width:15px;height:16px;background:#2a58c8"></div>
<div class="t" style="left:906px;top:746px;color:#fff;letter-spacing:-1.14px">EN</div>
<div class="a" style="left:931px;top:738px;width:93px;height:30px;background:linear-gradient(180deg,#1a9ef0 0,#1290e8 10%,#0f8be6 50%,#1188e0 90%,#0a6cc0 100%);border-left:1px solid #0a50a8"></div>
<svg class="a" style="left:922px;top:743px" width="20" height="20" viewBox="0 0 20 20"><circle cx="10" cy="10" r="9" fill="#2a78e8" stroke="#bcd8f8" stroke-width="1.2"/><path d="M11.5 6 L7.5 10 L11.5 14" stroke="#fff" stroke-width="2.2" fill="none"/></svg>
<svg class="a" style="left:942px;top:744px" width="16" height="18" viewBox="0 0 16 18"><rect x="5" y="1" width="10" height="8" fill="#28306a" stroke="#a8b0d8"/><rect x="1" y="6" width="10" height="8" fill="#28306a" stroke="#a8b0d8"/><rect x="3" y="15" width="6" height="2" fill="#c0c8e0"/></svg>
<svg class="a" style="left:961px;top:744px" width="16" height="16" viewBox="0 0 16 16"><rect x="0.5" y="2" width="14" height="13" fill="#f4f4f0" stroke="#c8c8c0"/><circle cx="7" cy="8.5" r="4" fill="none" stroke="#e0a0a0" stroke-dasharray="1.5 1.5"/><circle cx="13" cy="3" r="2.5" fill="#e02030"/></svg>
<div class="t" style="left:983px;top:746px;color:#fff;letter-spacing:0.09px">14:06</div>
</body></html>
